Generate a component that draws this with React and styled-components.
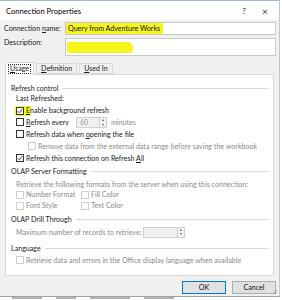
import React from 'react';
import styled, { createGlobalStyle } from 'styled-components';

const Global = createGlobalStyle`
  html, body { margin: 0; padding: 0; background: #ffffff; }
  body { font-family: Lato, "Noto Sans", sans-serif; font-size: 7.1px; color: #1a1a1a; }
  #root { width: 282px; height: 300px; overflow: hidden; }
  * { box-sizing: border-box; }
`;

const Window = styled.div`
  width: 280px;
  height: 297px;
  background: #f0f0f0;
  border-top: 1px solid #9fb6d6;
  border-right: 1px solid #bfc7d2;
  border-bottom: 1px solid #9aa3ad;
  display: flex;
  flex-direction: column;
  position: relative;
  & > * { flex-shrink: 0; }
`;

const TitleBar = styled.div`
  height: 19px;
  background: #ffffff;
  display: flex;
  align-items: center;
  padding: 0 0 0 6px;
`;

const Title = styled.div`
  flex: 1;
  font-size: 7.6px;
  color: #000;
`;

const TitleButton = styled.div`
  width: ${p => p.$w}px;
  text-align: center;
  font-size: ${p => p.$size}px;
  color: #333;
`;

const Form = styled.div`
  display: grid;
  grid-template-columns: 61px 1fr;
  row-gap: 3px;
  padding: 2px 3px 0 4px;
`;

const Label = styled.label`
  display: block;
  line-height: ${p => (p.$top ? 10 : 13)}px;
  color: #1a1a1a;
  white-space: nowrap;
`;

const Input = styled.div`
  height: ${p => p.$h}px;
  background: #fff;
  border: 1px solid #c9c9c9;
  display: flex;
  align-items: ${p => (p.$top ? 'flex-start' : 'stretch')};
  padding: ${p => (p.$top ? '3px 0 0 1px' : '0')};
`;

const Highlight = styled.span`
  background: #f6f51c;
  display: flex;
  align-items: center;
  padding: 0 3px 0 2px;
  color: #111;
`;

const Scribble = styled.div`
  width: 66px;
  height: 11px;
  background: #f6f51c;
  border-radius: 2px 6px 4px 2px;
`;

const TabStrip = styled.div`
  display: flex;
  align-items: flex-end;
  padding: 6px 0 0 5px;
  height: 18px;
  position: relative;
  z-index: 1;
`;

const Tab = styled.div`
  height: ${p => (p.$active ? 13 : 11)}px;
  padding: 0 3px;
  margin-right: 2px;
  margin-bottom: ${p => (p.$active ? -1 : 0)}px;
  background: ${p => (p.$active ? '#fff' : '#f0f0f0')};
  border: 1px solid #d9d9d9;
  border-bottom: ${p => (p.$active ? 'none' : '1px solid #d9d9d9')};
  display: flex;
  align-items: center;
  white-space: pre;
`;

const FocusText = styled.span`
  outline: ${p => (p.$focus ? '1px dotted #333' : 'none')};
  padding: 0 1px;
  line-height: 8px;
`;

const Panel = styled.div`
  margin: 0 5px 0 5px;
  height: 202px;
  background: #fff;
  border: 1px solid #d9d9d9;
  padding: 8.5px 4px 0 5px;
  display: flex;
  flex-direction: column;
  & > * { flex-shrink: 0; }
`;

const GroupHeader = styled.div`
  display: flex;
  align-items: center;
  height: 9px;
  margin-top: ${p => p.$mt || 0}px;
  margin-bottom: ${p => p.$mb || 0}px;
  color: #1e1e1e;
  white-space: pre;
  &::after {
    content: '';
    flex: 1;
    height: 1px;
    background: #dcdcdc;
    margin-left: 4px;
  }
`;

const Line = styled.div`
  display: flex;
  align-items: center;
  height: ${p => p.$h || 12}px;
  padding-left: ${p => p.$indent || 0}px;
  color: ${p => (p.$disabled ? '#8a8a8a' : '#1a1a1a')};
  white-space: pre;
`;

const Text = styled.span`
  white-space: pre;
  position: relative;
  color: ${p => (p.$disabled ? '#8a8a8a' : 'inherit')};
`;

const Box = styled.span`
  width: 8px;
  height: 8px;
  border: 1px solid ${p => (p.$disabled ? '#cfcfcf' : '#333')};
  background: #fff;
  display: inline-flex;
  align-items: center;
  justify-content: center;
  flex-shrink: 0;
`;

const CheckWrap = styled.span`
  display: inline-flex;
  align-items: center;
  flex-shrink: 0;
  background: ${p => (p.$hl ? '#f6f51c' : 'transparent')};
  padding: ${p => (p.$hl ? '1px 7px 1px 1px' : '0')};
  margin: ${p => (p.$hl ? '-1px -5px -1px -1px' : '0 2px 0 0')};
`;

const U = styled.span`
  text-decoration: underline;
`;

const Col = styled.span`
  display: inline-flex;
  align-items: center;
  width: ${p => p.$w}px;
  white-space: pre;
`;

const Spin = styled.span`
  width: ${p => p.$w}px;
  height: 11px;
  border: 1px solid #d0d0d0;
  background: ${p => p.$bg};
  display: inline-flex;
  align-items: center;
  margin: 0 ${p => p.$mr || 0}px 0 ${p => p.$ml || 0}px;
  color: #9a9a9a;
  padding-left: 3px;
  flex-shrink: 0;
`;

const SpinText = styled.span`
  flex: 1;
`;

const SpinArrows = styled.span`
  width: 7px;
  height: 9px;
  border-left: 1px solid #d0d0d0;
  display: flex;
  flex-direction: column;
  align-items: center;
  justify-content: space-around;
  background: #f4f4f4;
`;

const Arrow = styled.span`
  width: 0;
  height: 0;
  border-left: 1.5px solid transparent;
  border-right: 1.5px solid transparent;
  ${p => (p.$up ? 'border-bottom: 2px solid #555;' : 'border-top: 2px solid #555;')}
`;

const Footer = styled.div`
  display: flex;
  justify-content: flex-end;
  gap: 6px;
  padding: 5px 3px 0 0;
`;

const Button = styled.div`
  width: 44px;
  height: 13px;
  background: #e1e1e1;
  border: 1px solid ${p => (p.$primary ? '#0078d7' : '#adadad')};
  display: flex;
  align-items: center;
  justify-content: center;
  color: #111;
`;

const Grip = styled.svg`
  position: absolute;
  right: 1px;
  bottom: 1px;
`;

const Below = styled.div`
  height: 3px;
  display: flex;
  align-items: flex-start;
  gap: 14px;
  padding: 0 0 0 12px;
`;

const Dash = styled.span`
  width: ${p => p.$w}px;
  height: 2px;
  background: #b5b5b5;
`;

function Check({ checked, disabled, hl }) {
  return (
    <CheckWrap $hl={hl}>
      <Box $disabled={disabled}>
        {checked && (
          <svg width="6" height="6" viewBox="0 0 6 6">
            <path d="M0.6 3.1 L2.3 4.8 L5.4 1.0" fill="none" stroke="#333" strokeWidth="0.9" />
          </svg>
        )}
      </Box>
    </CheckWrap>
  );
}

function Spinner({ w, value, bg, ml, mr }) {
  return (
    <Spin $w={w} $bg={bg} $ml={ml} $mr={mr}>
      <SpinText>{value}</SpinText>
      <SpinArrows>
        <Arrow $up />
        <Arrow />
      </SpinArrows>
    </Spin>
  );
}

export default function App() {
  return (
    <>
      <Global />
      <Window>
        <TitleBar>
          <Title>Connection Properties</Title>
          <TitleButton $w={14} $size={8}>?</TitleButton>
          <TitleButton $w={28} $size={10}>×</TitleButton>
        </TitleBar>
        <Form>
          <Label>Connection <U>n</U>ame:</Label>
          <Input $h={13}>
            <Highlight>Query from Adventure Works</Highlight>
          </Input>
          <Label $top>Description:</Label>
          <Input $h={18} $top>
            <Scribble />
          </Input>
        </Form>
        <TabStrip>
          <Tab $active><FocusText $focus><U>U</U>sage</FocusText></Tab>
          <Tab><FocusText><U>D</U>efinition</FocusText></Tab>
          <Tab><FocusText><U>U</U>sed In</FocusText></Tab>
        </TabStrip>
        <Panel>
          <GroupHeader>Refresh control</GroupHeader>
          <Line $indent={5} $h={12}>Last Refreshed:</Line>
          <Line $indent={5} $h={12}><Check checked hl /><Text><U>E</U>nable background refresh</Text></Line>
          <Line $indent={5} $h={11.5}>
            <Check /><Col $w={50}><U>R</U>efresh every</Col>
            <Spinner w={31} value="60" bg="#f0f0f0" mr={4} />
            <Text $disabled>minutes</Text>
          </Line>
          <Line $indent={5} $h={12.5}><Check /><Text>Refresh data when <U>o</U>pening the file</Text></Line>
          <Line $indent={17} $h={11.5} $disabled><Check disabled /><Text>Remove data from the external data range before saving the workbook</Text></Line>
          <Line $indent={5} $h={12}><Check checked /><Text>Refresh this connection on Refresh <U>A</U>ll</Text></Line>
          <GroupHeader $mt={2.5} $mb={3.5}>OLAP Server Formatting</GroupHeader>
          <Line $indent={5} $h={10} $disabled>Retrieve the following formats from the server when using this connection:</Line>
          <Line $indent={5} $h={11} $disabled>
            <Col $w={65}><Check disabled />Number Format</Col>
            <Check disabled /><Text>Fill Color</Text>
          </Line>
          <Line $indent={5} $h={11} $disabled>
            <Col $w={65}><Check disabled />Font Style</Col>
            <Check disabled /><Text>Text Color</Text>
          </Line>
          <GroupHeader $mt={3.5} $mb={2.5}>OLAP Drill Through</GroupHeader>
          <Line $indent={5} $h={12} $disabled>
            <Col $w={127}>Maximum number of records to retrieve:</Col>
            <Spinner w={42} value="" bg="#f0f0f0" />
          </Line>
          <GroupHeader $mt={5.5} $mb={1.5}>Language</GroupHeader>
          <Line $indent={5} $h={12} $disabled><Check disabled /><Text>Retrieve data and errors in the Office display language when available</Text></Line>
        </Panel>
        <Footer>
          <Button $primary>OK</Button>
          <Button>Cancel</Button>
        </Footer>
        <Grip width="6" height="6" viewBox="0 0 6 6">
          <path d="M5 1 L1 5 M5 3 L3 5" stroke="#999" strokeWidth="0.8" />
        </Grip>
      </Window>
      <Below>
        <Dash $w={30} />
        <Dash $w={20} />
        <Dash $w={40} />
        <Dash $w={30} />
      </Below>
    </>
  );
}
